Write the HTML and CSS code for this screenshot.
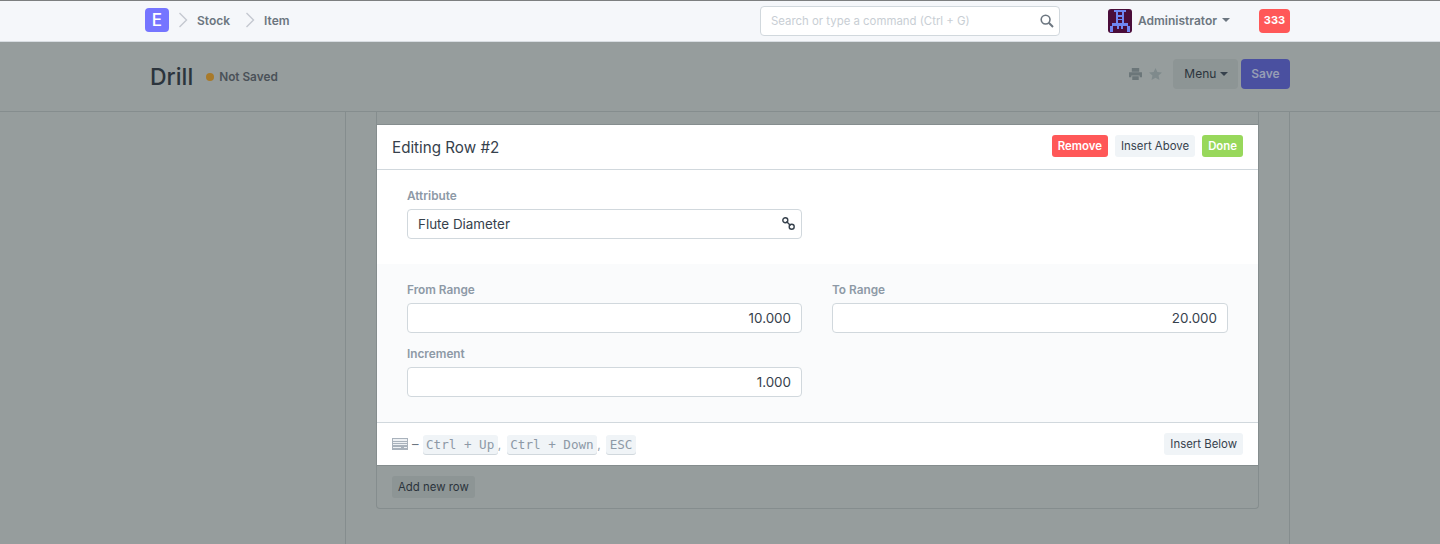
FILE: index.html
```html
<!DOCTYPE html>
<html lang="en">
<head>
<meta charset="utf-8">
<title>Drill</title>
<link rel="stylesheet" href="styles.css">
</head>
<body>
<header class="navbar">
  <div class="nav-left">
    <span class="logo">E</span>
    <svg class="crumb-sep" width="10" height="16" viewBox="0 0 10 16"><path d="M1.5 1l7 7-7 7" fill="none" stroke="#c4c9d0" stroke-width="1.4"/></svg>
    <span class="crumb">Stock</span>
    <svg class="crumb-sep" width="10" height="16" viewBox="0 0 10 16"><path d="M1.5 1l7 7-7 7" fill="none" stroke="#c4c9d0" stroke-width="1.4"/></svg>
    <span class="crumb">Item</span>
  </div>
  <div class="search">
    <span class="search-text">Search or type a command (Ctrl + G)</span>
    <svg width="14" height="14" viewBox="0 0 14 14"><circle cx="5.6" cy="5.6" r="4.4" fill="none" stroke="#6c7680" stroke-width="1.6"/><path d="M8.8 8.8l4.2 4.2" stroke="#6c7680" stroke-width="2"/></svg>
  </div>
  <div class="user">
    <svg class="avatar" width="24" height="24" viewBox="0 0 24 24"><rect width="24" height="24" rx="3" fill="#4a0d3a"/><path d="M6 1h12v2H6z M8 3h2v11H8z M14 3h2v11h-2z M10 6h4v2h-4z M10 10h4v1h-4z M4 14h16v3H4z M2 17h3v6H2z M19 17h3v6h-3z M9 17h2v3H9z M13 17h2v3h-2z" fill="#6f86f2"/></svg>
    <span class="user-name">Administrator</span>
    <span class="caret"></span>
  </div>
  <span class="badge">333</span>
</header>
<section class="page-head">
  <div class="title-wrap">
    <h1>Drill</h1>
    <span class="dot"></span>
    <span class="status">Not Saved</span>
  </div>
  <div class="actions">
    <svg width="13" height="12" viewBox="0 0 14 13"><path d="M3 0h8v4H3z M0 4.500h14V10h-2.500V8h-9v2H0z M3.500 9h7v4h-7z" fill="#6b7679"/></svg>
    <svg class="star" width="13" height="12" viewBox="0 0 14 13"><path d="M7 0l2 4.400 5 .5-3.700 3.200L11.300 13 7 10.500 2.700 13l1-4.900L0 4.900l5-.5z" fill="#7f8a8c"/></svg>
    <button class="btn-menu">Menu <span class="caret dark"></span></button>
    <button class="btn-save">Save</button>
  </div>
</section>
<main class="layout">
  <div class="column">
    <div class="grid">
      <div class="row-editor">
        <div class="editor-head">
          <span class="editor-title">Editing Row #2</span>
          <div class="editor-buttons">
            <button class="btn btn-red">Remove</button>
            <button class="btn">Insert Above</button>
            <button class="btn btn-green">Done</button>
          </div>
        </div>
        <div class="section">
          <div class="field">
            <label>Attribute</label>
            <div class="input">Flute Diameter
              <svg class="link" width="13" height="13" viewBox="0 0 13 13"><circle cx="3.300" cy="3.300" r="2.500" fill="none" stroke="#36414c" stroke-width="1.400"/><circle cx="9.700" cy="9.700" r="2.500" fill="none" stroke="#36414c" stroke-width="1.400"/><path d="M4.500 4.500l4 4" stroke="#36414c" stroke-width="1.400"/></svg>
            </div>
          </div>
        </div>
        <div class="section section-alt">
          <div class="field"><label>From Range</label><div class="input num">10.000</div></div>
          <div class="field"><label>To Range</label><div class="input num">20.000</div></div>
          <div class="field"><label>Increment</label><div class="input num">1.000</div></div>
        </div>
        <div class="editor-foot">
          <div class="shortcuts">
            <svg width="16" height="12" viewBox="0 0 16 12"><rect width="16" height="12" fill="#a9b2bc"/><path d="M1 1h14v2H1z M1 4h14v1H1z M1 6h14v1H1z M1 9h8v1H1z M12 9h3v1h-3z" fill="#eef1f4"/></svg>
            <span class="dash">–</span>
            <kbd>Ctrl + Up</kbd><span class="comma">,</span>
            <kbd>Ctrl + Down</kbd><span class="comma">,</span>
            <kbd>ESC</kbd>
          </div>
          <button class="btn">Insert Below</button>
        </div>
      </div>
      <div class="grid-foot"><button class="btn btn-add">Add new row</button></div>
    </div>
  </div>
</main>
</body>
</html>
```
FILE: styles.css
```css
* { box-sizing: border-box; }
html, body { margin: 0; height: 100%; overflow: hidden; }
body { background: #969d9d; font-family: Inter, "Liberation Sans", sans-serif; color: #36414c; font-size: 12px; }
button { font-family: inherit; border: 0; cursor: pointer; }

.navbar { height: 42px; background: #f5f7fa; border-top: 1px solid #7d7f80; border-bottom: 1px solid #d8dde2; display: flex; align-items: center; padding: 0 150px 0 145px; }
.nav-left { display: flex; align-items: center; width: 615px; margin-bottom: 2px; }
.logo { width: 24px; height: 24px; border-radius: 4px; background: #7575ff; color: #fff; font-size: 17px; font-weight: 500; display: flex; align-items: center; justify-content: center; }
.crumb-sep { margin: 0 9px 0 9px; }
.crumb { color: #6c7680; font-weight: 600; font-size: 12px; margin-right: 6px; }
.search { width: 300px; height: 30px; background: #fff; border: 1px solid #d1d8dd; border-radius: 4px; display: flex; align-items: center; justify-content: space-between; padding: 0 5px 1px 10px; }
.search-text { color: #c8ced4; font-size: 11.400px; }
.user { display: flex; align-items: center; margin-left: 48px; width: 151px; }
.avatar { flex: none; }
.user-name { margin: 0 0 2px 6px; color: #6c7680; font-weight: 600; font-size: 12px; }
.caret { display: inline-block; margin-left: 5px; border-top: 4px solid #6c7680; border-left: 4px solid transparent; border-right: 4px solid transparent; vertical-align: middle; }
.user .caret { margin-bottom: 2px; }
.caret.dark { border-top-color: #36414c; margin-left: 0; }
.badge { width: 31px; height: 24px; border-radius: 4px; background: #ff5858; color: #fff; font-size: 11px; font-weight: 700; display: flex; align-items: center; justify-content: center; padding-bottom: 2px; }

.page-head { height: 70px; border-bottom: 1px solid #858d8e; display: flex; align-items: center; justify-content: space-between; padding: 0 150px; }
.title-wrap { display: flex; align-items: center; }
h1 { margin: 0; font-size: 23px; font-weight: 500; color: #2b343c; }
.dot { width: 8px; height: 8px; border-radius: 50%; background: #a87a2a; margin-left: 13px; }
.status { margin-left: 5px; font-weight: 600; font-size: 11.800px; color: #4a5158; }
.actions { display: flex; align-items: center; margin-top: -5px; }
.actions svg:first-child { margin-bottom: 1px; }
.star { margin: 0 0 1px 7px; }
.btn-menu { height: 30px; width: 65px; margin-left: 11px; background: #8d9595; border-radius: 4px; font-size: 12px; color: #2b343c; padding: 0 0 2px 1px; }
.btn-save { height: 30px; width: 49px; margin-left: 3px; background: #4a50a0; border-radius: 4px; font-size: 12px; font-weight: 600; color: #969db5; padding: 0 0 2px; }

.layout { height: 433px; margin: 0 150px 0 345px; border-left: 1px solid #858d8e; border-right: 1px solid #858d8e; padding: 0 30px; }
.column { height: 100%; }
.grid { width: 883px; height: 397px; border: 1px solid #858d8e; border-top: 0; border-radius: 0 0 4px 4px; padding-top: 13px; }
.row-editor { margin: 0 -1px 0 0; background: #fff; box-shadow: 0 -1px 0 #858d8e, 0 1px 0 #858d8e; width: 881px; }
.editor-head { height: 45px; border-bottom: 1px solid #d1d8dd; display: flex; align-items: center; justify-content: space-between; padding: 0 15px; }
.editor-title { font-size: 15.200px; color: #36414c; }
.editor-buttons { display: flex; gap: 7px; margin-top: -2px; }
.btn { height: 22px; padding: 0 6px; border-radius: 3px; background: #f0f4f7; font-size: 11.400px; color: #36414c; }
.btn-red { background: #ff5858; color: #fff; font-weight: 600; }
.btn-green { background: #98d85b; color: #fff; font-weight: 600; }
.section { display: grid; grid-template-columns: 395px 396px; column-gap: 30px; padding: 18px 30px 16px; }
.section-alt { background: #fafbfc; padding: 18px 30px 16px; border-bottom: 1px solid #d1d8dd; row-gap: 4px; }
.field { min-width: 0; margin-bottom: 9px; }
label { display: block; color: #8d99a6; font-size: 11.800px; font-weight: 600; margin-bottom: 5px; line-height: 16px; }
.input { height: 30px; border: 1px solid #d1d8dd; border-radius: 4px; background: #fff; font-size: 13.400px; color: #36414c; display: flex; align-items: center; justify-content: space-between; padding: 0 10px 1px; position: relative; }
.input.num { justify-content: flex-end; }
.link { position: absolute; right: 6px; top: 7px; }
.editor-foot { height: 42px; display: flex; align-items: center; justify-content: space-between; padding: 0 15px; }
.shortcuts { display: flex; align-items: center; color: #8d99a6; }
.dash { margin: 0 4px 0 4px; font-size: 13px; color: #6c7680; }
.comma { margin-right: 3px; width: 6px; }
kbd { font-family: "DejaVu Sans Mono", monospace; font-size: 12.600px; background: #f0f4f7; border-radius: 3px; box-shadow: 0 1px 0 #d1d8dd; padding: 2px 3.500px; color: #8d99a6; }
.grid-foot { padding: 11px 15px; }
.btn-add { background: #8d9595; color: #2b343c; }
```
